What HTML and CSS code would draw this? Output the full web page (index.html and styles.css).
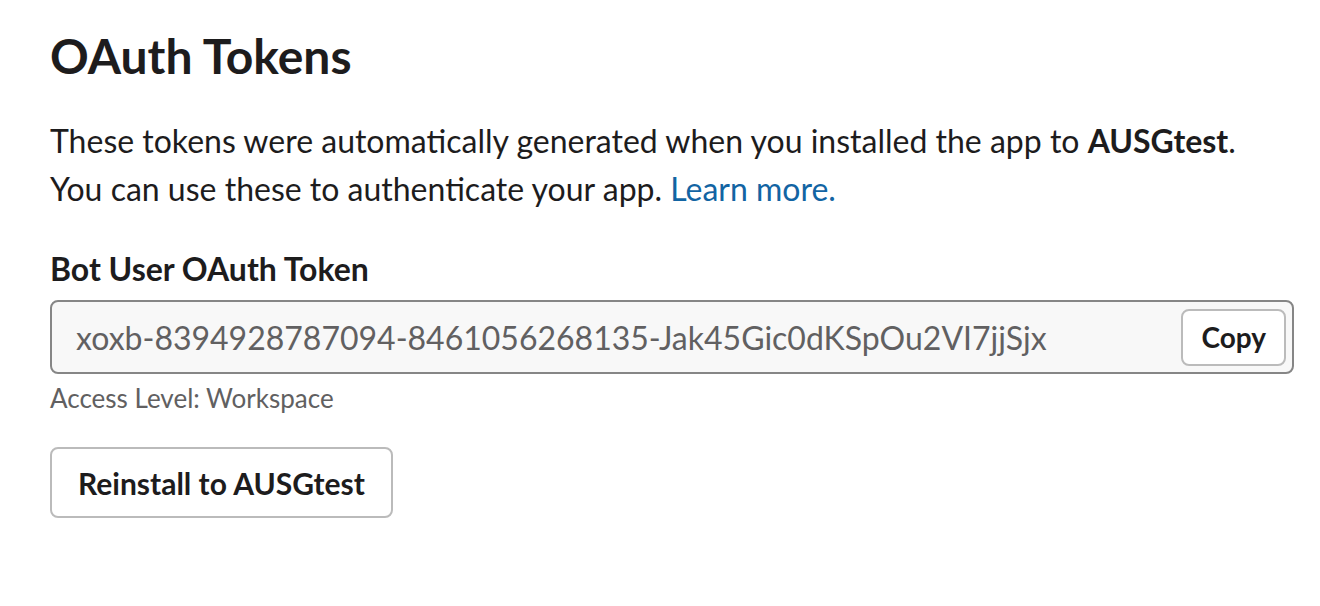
FILE: index.html
```html
<!DOCTYPE html>
<html>
<head>
<meta charset="utf-8">
<link rel="stylesheet" href="styles.css">
</head>
<body>
<main class="page">
  <h1 class="title">OAuth Tokens</h1>
  <p class="desc">These tokens were automatically generated when you installed the app to <b>AUSGtest</b>.<br>You can use these to authenticate your app. <a class="link" href="#">Learn more.</a></p>
  <h2 class="label">Bot User OAuth Token</h2>
  <div class="token-field">
    <span class="token">xoxb-8394928787094-8461056268135-Jak45Gic0dKSpOu2VI7jjSjx</span>
    <button class="btn copy">Copy</button>
  </div>
  <div class="hint">Access Level: Workspace</div>
  <button class="btn reinstall">Reinstall to AUSGtest</button>
</main>
</body>
</html>
```
FILE: styles.css
```css
html, body { margin: 0; padding: 0; background: #fff; }
body { font-family: Lato, "Noto Sans", sans-serif; color: #1d1c1d; }
.page { padding: 24px 26px 0 50px; display: flex; flex-direction: column; align-items: flex-start; }
.title { font-size: 48px; font-weight: 700; margin: 0; line-height: 64px; }
.desc { font-size: 32px; line-height: 48px; margin: 29px 0 0; }
.desc b { font-weight: 700; }
.link { color: #1264a3; text-decoration: none; }
.label { font-size: 32px; font-weight: 700; margin: 34px 0 0; line-height: 44px; }
.token-field { box-sizing: border-box; width: 1244px; height: 74px; margin-top: 9px; border: 2px solid #868686; border-radius: 8px; background: #f8f8f8; display: flex; align-items: center; justify-content: space-between; padding: 0 6px 0 24px; }
.token { font-size: 32px; color: #616061; }
.btn { font-family: Lato, "Noto Sans", sans-serif; font-weight: 700; color: #1d1c1d; background: #fff; border: 2px solid #bbbbbb; border-radius: 8px; cursor: pointer; }
.copy { font-size: 28px; height: 57px; padding: 0 18px; }
.hint { font-size: 26px; color: #616061; margin-top: 6px; line-height: 36px; }
.reinstall { font-size: 30px; height: 71px; padding: 0 26px; margin-top: 31px; }
```
